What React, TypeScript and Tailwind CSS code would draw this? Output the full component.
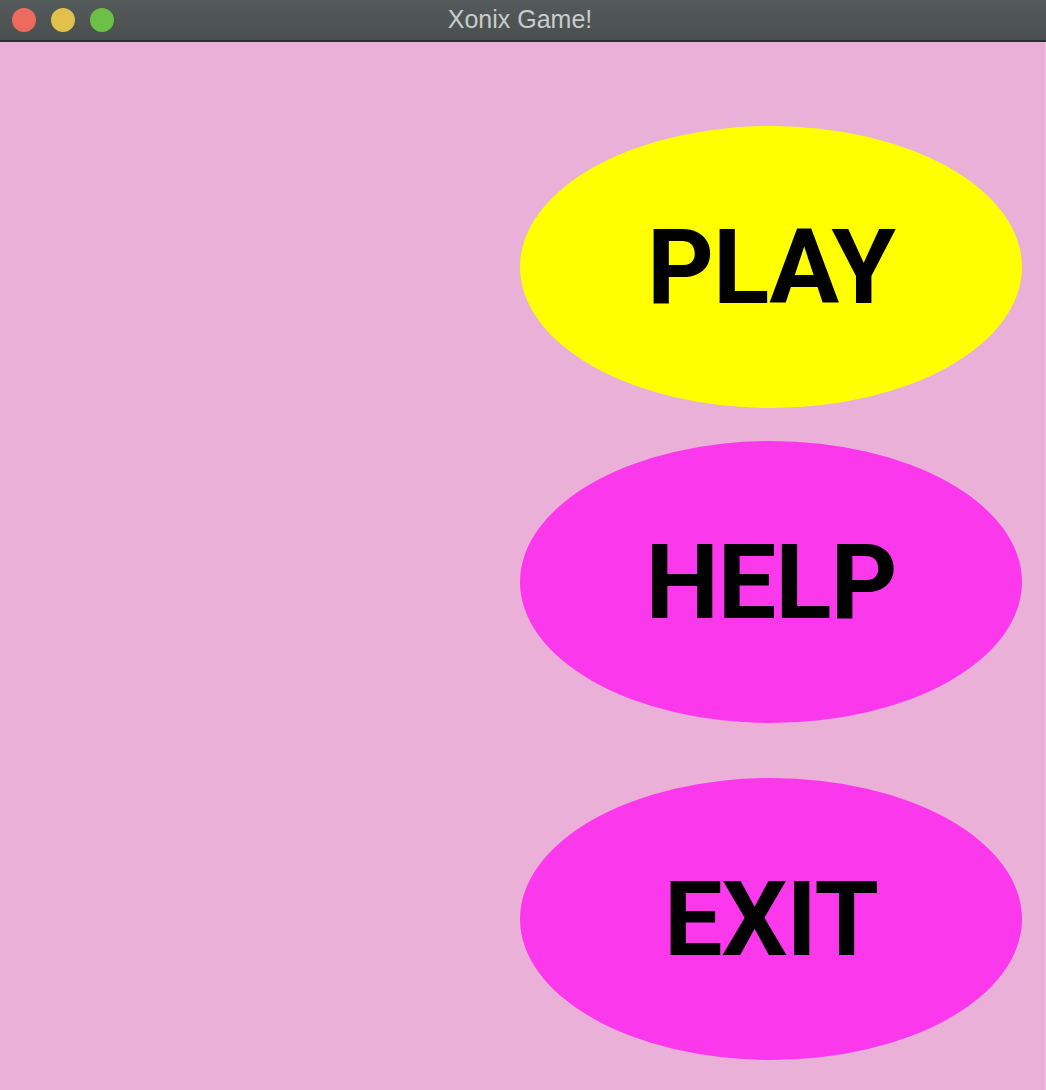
const buttons = [
  { label: "PLAY", color: "bg-[#ffff00]", gap: "mt-[84px]" },
  { label: "HELP", color: "bg-[#fb38ec]", gap: "mt-[33px]" },
  { label: "EXIT", color: "bg-[#fb38ec]", gap: "mt-[55px]" },
];

export default function App() {
  return (
    <div className="w-[1046px] h-[1090px] flex flex-col bg-[#ebb0d7] overflow-hidden">
      {/* window title bar */}
      <div className="h-[42px] shrink-0 flex items-center bg-gradient-to-b from-[#555a5a] to-[#4a4e4e] border-b-2 border-[#2c2e2e] relative">
        <div className="flex items-center gap-[15px] pl-[12px]">
          <span className="w-[24px] h-[24px] rounded-full bg-[#ee6a5f]" />
          <span className="w-[24px] h-[24px] rounded-full bg-[#e1c04c]" />
          <span className="w-[24px] h-[24px] rounded-full bg-[#6bc045]" />
        </div>
        <div className="absolute inset-0 flex items-center justify-center">
          <span className="text-[25px] text-[#c9cccc] font-['Liberation_Sans',sans-serif] ml-[-6px]">Xonix Game!</span>
        </div>
      </div>

      <div className="flex-1 flex flex-col items-end pr-[23px] border-r border-[#f0c4e2]">
        {buttons.map((b) => (
          <div
            key={b.label}
            className={`${b.gap} ${b.color} w-[502px] h-[282px] rounded-[50%] flex items-center justify-center pt-[2px]`}
          >
            <span className="text-[104px] leading-none font-bold text-black font-['Roboto',sans-serif] tracking-[-1px]">
              {b.label}
            </span>
          </div>
        ))}
      </div>
    </div>
  );
}
